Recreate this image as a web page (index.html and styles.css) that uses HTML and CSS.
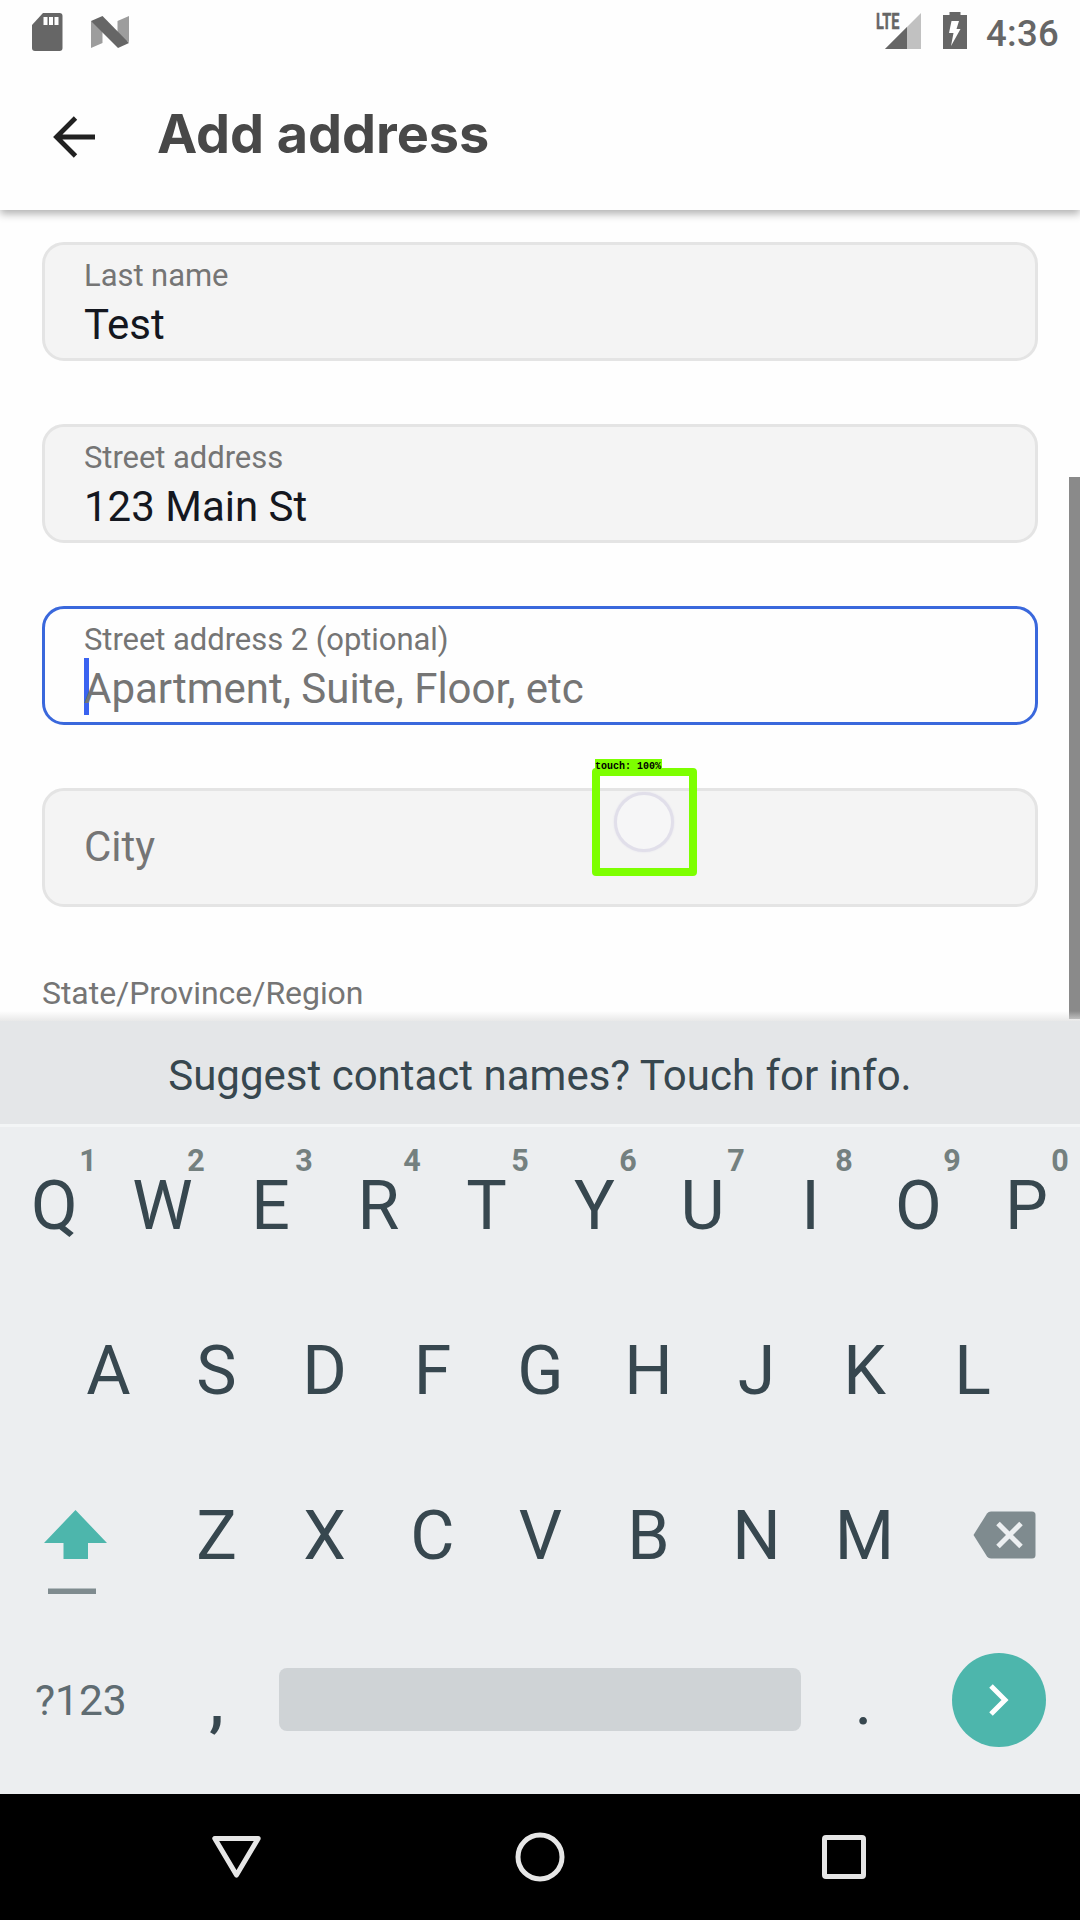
FILE: index.html
```html
<!DOCTYPE html>
<html lang="en">
<head>
<meta charset="utf-8">
<title>Add address</title>
<link rel="stylesheet" href="styles.css">
</head>
<body>
<div class="screen">
  <header class="top">
    <div class="status">
      <svg class="sd" width="31" height="38" viewBox="0 0 31 38"><path d="M11 0H27.500Q30.500 0 30.500 3V35Q30.500 38 27.500 38H3Q0 38 0 35V12Z" fill="#666"/><path d="M11.500 4h4v8h-4zM17 4h4v8h-4zM22.500 4h4v8h-4z" fill="#fefefe"/></svg>
      <svg class="nougat" width="38" height="32" viewBox="0 0 38 32"><path d="M0 5V32L11.500 27V9Z M26.500 5L38 0V26L26.500 22Z" fill="#9d9d9d"/><path d="M0 5L11.500 0L38 27L27 32Z" fill="#666"/></svg>
      <div class="status-right">
        <div class="signal"><svg width="36" height="36" viewBox="0 0 36 36"><path d="M36 0V36H0Z" fill="#c1c1c1"/><path d="M22 14V36H0Z" fill="#666"/></svg><span class="lte">LTE</span></div>
        <svg class="battery" width="24" height="37" viewBox="0 0 24 37"><path d="M6.500 0H17.500V3H24V37H0V3H6.500Z" fill="#666"/><path d="M8.500 9H16L13.500 17H17.500L8 34L10.500 21H6Z" fill="#fefefe"/></svg>
        <span class="clock">4:36</span>
      </div>
    </div>
    <div class="appbar">
      <svg class="back" width="42" height="42" viewBox="0 0 42 42"><path d="M42 21H4M22.500 2L3.500 21L22.500 40" fill="none" stroke="#212121" stroke-width="4.800"/></svg>
      <h1>Add address</h1>
    </div>
  </header>

  <main class="form">
    <div class="field"><label>Last name</label><div class="value">Test</div></div>
    <div class="field"><label>Street address</label><div class="value">123 Main St</div></div>
    <div class="field focused"><label>Street address 2 (optional)</label><div class="value hint"><i class="caret"></i>Apartment, Suite, Floor, etc</div></div>
    <div class="field empty"><div class="value hint">City</div></div>
    <div class="section">State/Province/Region</div>
    <div class="scrollbar"></div>
    <div class="fade"></div>
    <div class="touch"><span class="touch-label">touch: 100%</span><span class="touch-dot"></span></div>
  </main>

  <section class="keyboard">
    <div class="suggest">Suggest contact names? Touch for info.</div>
    <div class="row">
      <div class="key">Q<sup>1</sup></div><div class="key">W<sup>2</sup></div><div class="key">E<sup>3</sup></div><div class="key">R<sup>4</sup></div><div class="key">T<sup>5</sup></div><div class="key">Y<sup>6</sup></div><div class="key">U<sup>7</sup></div><div class="key">I<sup>8</sup></div><div class="key">O<sup>9</sup></div><div class="key">P<sup>0</sup></div>
    </div>
    <div class="row">
      <div class="key">A</div><div class="key">S</div><div class="key">D</div><div class="key">F</div><div class="key">G</div><div class="key">H</div><div class="key">J</div><div class="key">K</div><div class="key">L</div>
    </div>
    <div class="row">
      <div class="side shift"><svg width="64" height="86" viewBox="0 0 64 86"><path d="M31.500 1L63 34H44V50H19.500V34H0Z" fill="#4db6ac"/><path d="M4 79.500H52V85H4Z" fill="#7f8b8f"/></svg></div>
      <div class="key">Z</div><div class="key">X</div><div class="key">C</div><div class="key">V</div><div class="key">B</div><div class="key">N</div><div class="key">M</div>
      <div class="side delete"><svg width="63" height="48" viewBox="0 0 63 48"><path d="M18 .5H59Q62.500 .5 62.500 4V44Q62.500 47.500 59 47.500H18Q15.500 47.500 14 45.500L.5 24L14 2.500Q15.500 .5 18 .5Z" fill="#7f8b8f"/><path d="M25 12.500L48 35.500M48 12.500L25 35.500" stroke="#eceff1" stroke-width="5"/></svg></div>
    </div>
    <div class="row bottom">
      <div class="symbols">?123</div>
      <div class="key comma">,</div>
      <div class="space"></div>
      <div class="key">.</div>
      <div class="enter"><svg width="20" height="32" viewBox="0 0 20 32"><path d="M2 2L16 16L2 30" fill="none" stroke="#fff" stroke-width="5"/></svg></div>
    </div>
  </section>

  <nav class="nav">
    <svg width="49" height="50" viewBox="0 0 49 50"><path d="M2.800 6.500H46.200L24.500 43Z" fill="none" stroke="#e6e6e6" stroke-width="5" stroke-linejoin="round"/></svg>
    <svg width="50" height="50" viewBox="0 0 50 50"><circle cx="25" cy="25" r="22" fill="none" stroke="#e6e6e6" stroke-width="5"/></svg>
    <svg width="44" height="50" viewBox="0 0 44 50"><rect x="2.500" y="5.500" width="39" height="39" rx="1.500" fill="none" stroke="#e6e6e6" stroke-width="5"/></svg>
  </nav>
</div>
</body>
</html>
```
FILE: styles.css
```css
* { box-sizing: border-box; }
body { margin: 0; font-family: Roboto, "Liberation Sans", sans-serif; }
svg { display: block; flex: none; }

.screen { width: 1080px; height: 1920px; display: flex; flex-direction: column; overflow: hidden; background: #fefefe; }

.top { height: 210px; flex: none; background: #fefefe; position: relative; z-index: 2; box-shadow: 0 4px 8px rgba(0, 0, 0, .3); }
.status { height: 72px; display: flex; align-items: flex-start; padding: 0 21px 0 32px; color: #666; }
.sd { margin-top: 13px; }
.nougat { margin: 16px 0 0 28px; }
.status-right { margin-left: auto; display: flex; align-items: flex-start; }
.signal { position: relative; margin-top: 13px; }
.lte { position: absolute; left: -9px; top: -2px; font-size: 22px; font-weight: 700; line-height: 22px; transform: scaleX(.66); transform-origin: 0 0; -webkit-text-stroke: .5px #666; }
.battery { margin: 12px 0 0 22px; }
.clock { margin: 12px 0 0 19px; font-size: 36.500px; font-weight: 500; line-height: 44px; letter-spacing: .3px; }
.appbar { height: 138px; display: flex; align-items: center; padding: 0 0 14px 53px; }
.back { margin-top: 5px; }
.appbar h1 { margin: 0 0 0 62px; font: 700 54px/64px Inter, Roboto, sans-serif; letter-spacing: -.05px; color: #484848; white-space: nowrap; }

.form { height: 811px; flex: none; position: relative; display: flex; flex-direction: column; gap: 63px; padding: 32px 42px 0; }
.field { height: 119px; flex: none; border: 3px solid #e4e4e4; border-radius: 22px; background: #f4f4f4; padding: 13px 39px 0; }
.field label { display: block; font-size: 31px; line-height: 36px; letter-spacing: -.06px; color: #757575; }
.value { position: relative; margin-top: 7px; font-size: 42px; line-height: 48px; letter-spacing: 0; color: #14171f; white-space: nowrap; }
.value.hint { color: #757575; letter-spacing: -.02px; }
.field.focused { background: #fefefe; border-color: #3a68dc; }
.caret { position: absolute; left: 0; top: -7px; width: 5px; height: 57px; background: #3a63f0; z-index: -1; }
.focused .value { z-index: 0; }
.field.empty { padding-top: 25px; }
.section { margin-top: 5px; font-size: 32px; line-height: 36px; letter-spacing: -.05px; color: #757575; }
.scrollbar { position: absolute; right: 0; top: 267px; width: 11px; height: 542px; background: #8a8a8a; }
.fade { position: absolute; left: 0; right: 0; bottom: 0; height: 10px; background: linear-gradient(rgba(225, 225, 225, 0), rgba(225, 225, 225, .75)); }
.touch { position: absolute; left: 592px; top: 558px; width: 105px; height: 108px; border: 8px solid #7dff00; border-radius: 4px; }
.touch-label { position: absolute; left: -5px; top: -17px; width: 67px; height: 12px; background: #7dff00; color: #000; font: 700 10px/15px "Liberation Mono", monospace; white-space: nowrap; }
.touch-dot { position: absolute; left: 14px; top: 16px; width: 60px; height: 60px; border: 3px solid #e1dfea; border-radius: 50%; background: #f6f6f7; box-shadow: 0 0 2px #e1dfea; }

.keyboard { height: 773px; flex: none; background: #eceef0; color: #37474f; display: flex; flex-direction: column; }
.suggest { height: 106px; flex: none; background: #e4e6e8; border-bottom: 3px solid #f3f5f6; text-align: center; font-size: 42px; line-height: 109px; }
.row { height: 165px; flex: none; display: flex; justify-content: center; }
.key { position: relative; width: 108px; flex: none; text-align: center; font-size: 68px; line-height: 158px; padding-left: 1px; }
.key sup { position: absolute; left: 70px; top: 16px; width: 36px; font-size: 30.500px; font-weight: 700; line-height: 36px; color: #74807f; }
.key.comma { font-weight: 500; }
.side { width: 162px; flex: none; }
.shift { padding: 52px 0 0 44px; }
.delete { padding: 54px 0 0 55px; }
.row.bottom { justify-content: flex-start; }
.symbols { width: 162px; flex: none; padding-left: 35px; font-size: 42.500px; line-height: 157px; color: #5f6c72; }
.space { width: 522px; height: 63px; flex: none; margin: 46px 8px 0 9px; border-radius: 8px; background: #cfd3d6; }
.enter { width: 94px; height: 94px; flex: none; margin: 31px 0 0 35px; border-radius: 50%; background: #4db6ac; display: flex; align-items: center; justify-content: center; }

.nav { height: 126px; flex: none; background: #000; display: flex; justify-content: space-between; align-items: center; padding: 0 214px 0 212px; }
.nav svg:nth-child(2) { margin-left: -4px; }
```
